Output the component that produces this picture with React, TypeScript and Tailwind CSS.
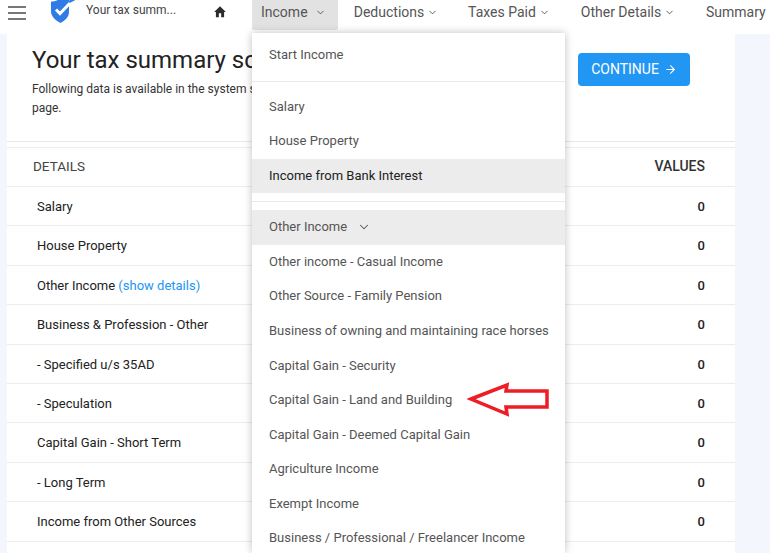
import { ChevronDown, ArrowRight } from "lucide-react";

const navItems = [
  { label: "Deductions", width: "w-[114px] pl-[2px]" },
  { label: "Taxes Paid", width: "w-[114px]" },
  { label: "Other Details", width: "w-[124px]" },
];

const rows = [
  "Salary",
  "House Property",
  "Other Income",
  "Business & Profession - Other",
  "- Specified u/s 35AD",
  "- Speculation",
  "Capital Gain - Short Term",
  "- Long Term",
  "Income from Other Sources",
  "",
];

const otherIncome = [
  "Other income - Casual Income",
  "Other Source - Family Pension",
  "Business of owning and maintaining race horses",
  "Capital Gain - Security",
  "Capital Gain - Land and Building",
  "Capital Gain - Deemed Capital Gain",
  "Agriculture Income",
  "Exempt Income",
  "Business / Professional / Freelancer Income",
];

function Logo() {
  return (
    <svg viewBox="0 0 26 26" className="h-[26px] w-[26px]" aria-hidden>
      <path
        d="M1 2.500 C5 2.500 9 1 12 -2 L19 0 L19 13 C19 18 15 21.500 10.500 24 C6 21.500 1 18 1 12 Z"
        fill="#2f7be8"
      />
      <path d="M6 10.500 L10 14.500 L20 4" fill="none" stroke="#ffffff" strokeWidth="3" />
      <path d="M19 3 L25 0" stroke="#2f7be8" strokeWidth="2.500" />
    </svg>
  );
}

function HomeIcon() {
  return (
    <svg viewBox="0 0 24 24" className="h-[14px] w-[14px]" fill="#2b2b2b" aria-hidden>
      <path d="M10 21v-7h4v7h5v-9h3L12 2 2 12h3v9z" />
    </svg>
  );
}

function Header() {
  return (
    <header className="flex h-[34px] items-start overflow-hidden bg-white text-[14px] text-[#555555]">
      <div className="mt-[6px] ml-[8px] flex w-[18px] flex-col gap-[4px]">
        <span className="h-[2px] bg-[#777777]" />
        <span className="h-[2px] bg-[#777777]" />
        <span className="h-[2px] bg-[#777777]" />
      </div>
      <div className="ml-[24px] -mt-[1px] h-[26px] w-[26px]">
        <Logo />
      </div>
      <span className="ml-[10px] mt-[1px] w-[110px] text-[12px] leading-[18px] whitespace-nowrap text-[#444444]">
        Your tax summ...
      </span>
      <div className="ml-[17px] mt-[5px]">
        <HomeIcon />
      </div>
      <div className="ml-[25px] flex h-[30px] w-[86px] items-center gap-[7px] rounded-b-[2px] bg-[#e2e2e2] pb-[5px] pl-[9px]">
        Income
        <ChevronDown size={11} strokeWidth={2} />
      </div>
      {navItems.map((item) => (
        <div
          key={item.label}
          className={`flex h-[25px] items-center justify-center gap-[3px] whitespace-nowrap ${item.width}`}
        >
          {item.label}
          <ChevronDown size={11} strokeWidth={2} />
        </div>
      ))}
      <div className="ml-[16px] flex h-[25px] items-center whitespace-nowrap">Summary</div>
    </header>
  );
}

function SummaryCard() {
  return (
    <section className="ml-[7px] h-[519px] w-[728px] overflow-hidden bg-white text-[#212529]">
      <div className="flex h-[108px] justify-between border-b border-[#e8e8e8] pr-[45px] pl-[25px]">
        <div className="w-[520px] pt-[10px]">
          <h1 className="overflow-hidden text-[24px] leading-[32px] whitespace-nowrap text-[#222222]">
            Your tax summary screen
          </h1>
          <p className="mt-[4px] text-[12px] leading-[19px] text-[#333333]">
            Following data is available in the system so far, please check all the details on this
            <br />
            page.
          </p>
        </div>
        <button className="mt-[19px] flex h-[33px] w-[112px] items-center justify-center gap-[5px] rounded-[4px] bg-[#2196f3] text-[14px] text-white">
          CONTINUE
          <ArrowRight size={13} strokeWidth={2} />
        </button>
      </div>
      <div className="mt-[5px] flex h-[40px] items-center justify-between border-y border-[#ececec] pr-[30px] pl-[26px]">
        <span className="pb-[2px] text-[13.500px] text-[#444444]">DETAILS</span>
        <span className="pb-[2px] text-[14px] font-medium text-[#333333]">VALUES</span>
      </div>
      {rows.map((row) => (
        <div
          key={row}
          className="flex h-[39.4px] items-center justify-between border-b border-[#ececec] pt-[1px] pr-[30px] pl-[30px] text-[13px] text-[#222222]"
        >
          <span>
            {row}
            {row === "Other Income" && <span className="text-[#2196f3]"> (show details)</span>}
          </span>
          {row && <span className="font-medium">0</span>}
        </div>
      ))}
    </section>
  );
}

function MenuItem({ label }: { label: string }) {
  return (
    <div className="flex h-[34.6px] items-center pb-[2px] pl-[17px] whitespace-nowrap">{label}</div>
  );
}

function IncomeMenu() {
  return (
    <nav className="absolute top-[33px] left-[252px] h-[520px] w-[313px] overflow-hidden bg-white text-[13px] text-[#555555] shadow-[0_0_8px_rgba(0,0,0,0.25)]">
      <div className="flex h-[49px] items-center border-b border-[#e8e8e8] pb-[5px] pl-[17px]">
        Start Income
      </div>
      <div className="h-[7px]" />
      <div className="flex h-[34.6px] items-center pl-[17px]">Salary</div>
      <div className="flex h-[34.6px] items-center pl-[17px]">House Property</div>
      <div className="mt-[1px] flex h-[34px] items-center bg-[#ececec] pl-[17px] text-[#222222]">
        Income from Bank Interest
      </div>
      <div className="h-[9px] border-b border-[#e8e8e8]" />
      <div className="h-[8px]" />
      <div className="flex h-[35px] items-center gap-[10px] bg-[#ececec] pb-[2px] pl-[17px]">
        Other Income
        <ChevronDown size={14} strokeWidth={1.75} />
      </div>
      {otherIncome.map((item) => (
        <MenuItem key={item} label={item} />
      ))}
    </nav>
  );
}

function RedArrow() {
  return (
    <svg
      viewBox="0 0 84 38"
      className="absolute top-[381px] left-[467px] h-[38px] w-[84px]"
      aria-hidden
    >
      <path
        d="M4 18 L40 4 L39 10 L80 10 L80 26 L39 26 L40 33 Z"
        fill="none"
        stroke="#ee1c25"
        strokeWidth="3.500"
      />
    </svg>
  );
}

export default function App() {
  return (
    <div
      className="relative h-[553px] w-[770px] overflow-hidden bg-[#f3f6fc]"
      style={{ fontFamily: "Roboto, Arial, sans-serif" }}
    >
      <Header />
      <SummaryCard />
      <IncomeMenu />
      <RedArrow />
    </div>
  );
}
